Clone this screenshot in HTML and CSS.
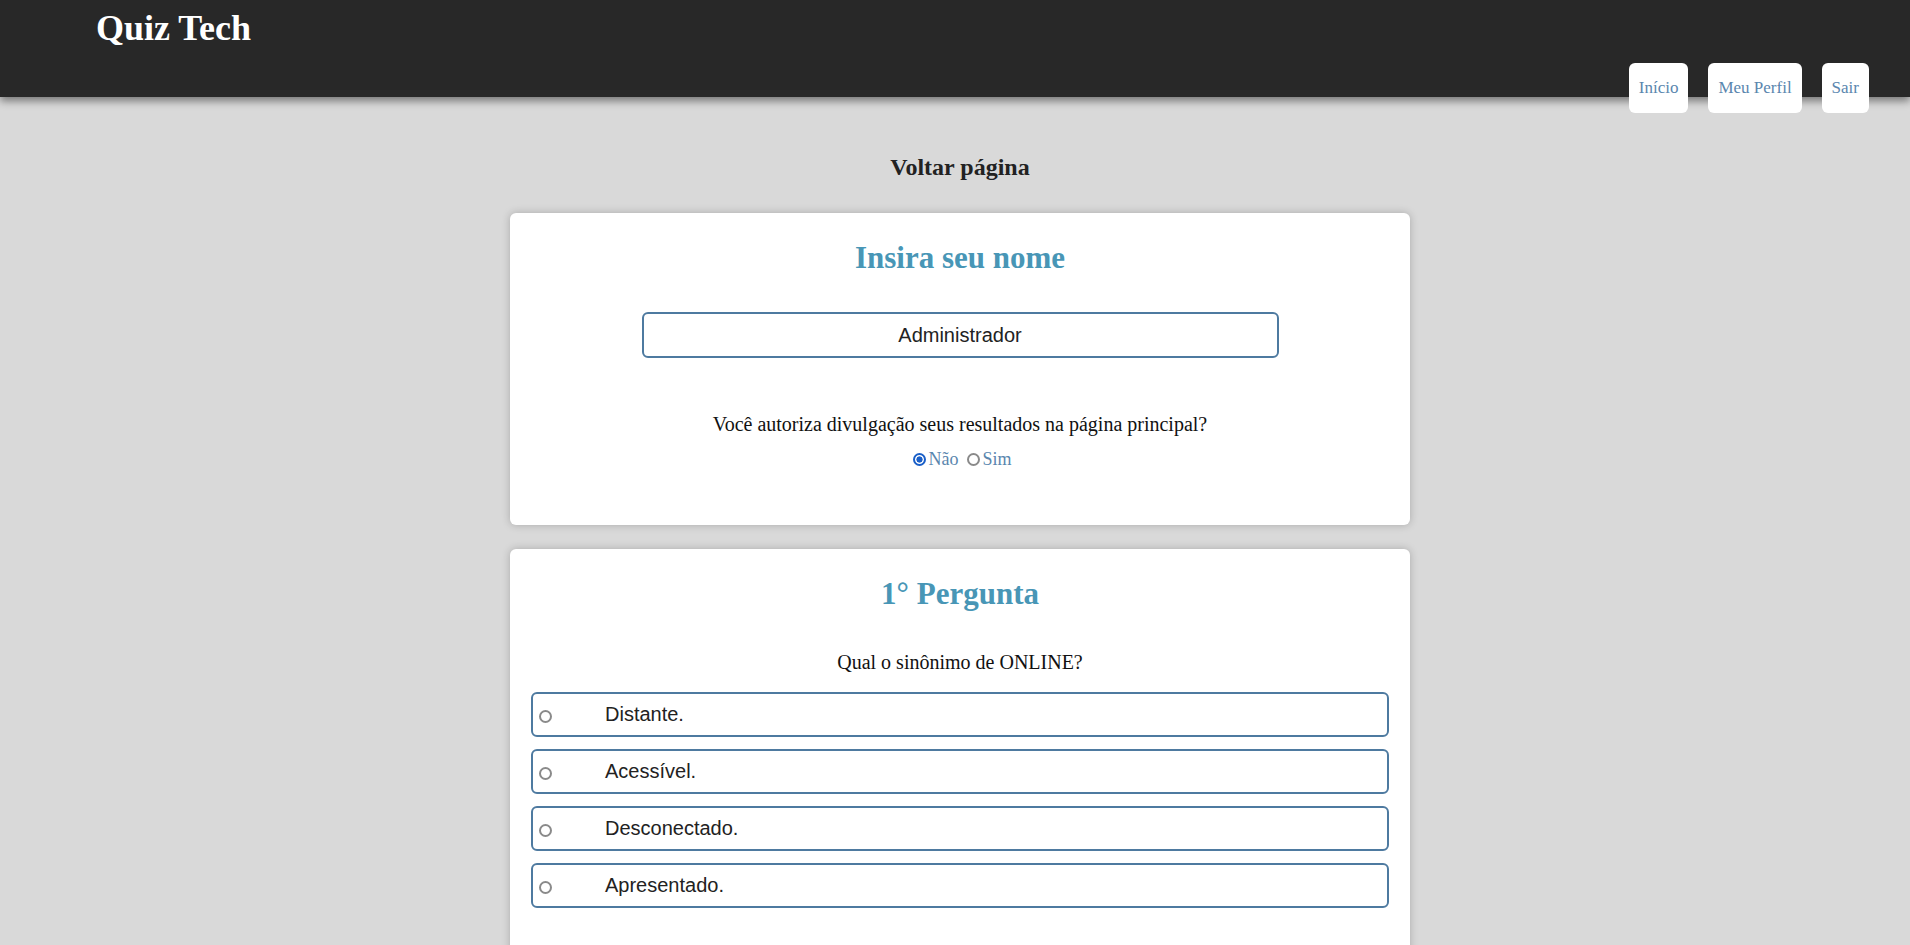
FILE: index.html
```html
<!DOCTYPE html>
<html lang="pt-BR">
<head>
<meta charset="utf-8">
<title>Quiz Tech</title>
<link rel="stylesheet" href="styles.css">
</head>
<body>
<header class="topbar">
  <h1 class="brand">Quiz Tech</h1>
  <nav class="nav">
    <a class="nav-btn" href="#">Início</a>
    <a class="nav-btn" href="#">Meu Perfil</a>
    <a class="nav-btn" href="#">Sair</a>
  </nav>
</header>
<main class="content">
  <a class="back" href="#">Voltar página</a>
  <section class="card card-name">
    <h2 class="card-title">Insira seu nome</h2>
    <input class="name-input" type="text" value="Administrador">
    <p class="question">Você autoriza divulgação seus resultados na página principal?</p>
    <div class="consent">
      <label class="consent-opt"><input class="radio" type="radio" name="consent" checked>Não</label>
      <label class="consent-opt"><input class="radio" type="radio" name="consent">Sim</label>
    </div>
  </section>
  <section class="card card-question">
    <h2 class="card-title">1° Pergunta</h2>
    <p class="question q-main">Qual o sinônimo de ONLINE?</p>
    <div class="options">
      <label class="option"><input class="radio" type="radio" name="q1"><span class="option-text">Distante.</span></label>
      <label class="option"><input class="radio" type="radio" name="q1"><span class="option-text">Acessível.</span></label>
      <label class="option"><input class="radio" type="radio" name="q1"><span class="option-text">Desconectado.</span></label>
      <label class="option"><input class="radio" type="radio" name="q1"><span class="option-text">Apresentado.</span></label>
    </div>
  </section>
</main>
</body>
</html>
```
FILE: styles.css
```css
html, body {
  margin: 0;
  padding: 0;
}
body {
  background: #d9d9d9;
  font-family: "Liberation Serif", "Times New Roman", serif;
  color: #111;
}
.topbar {
  height: 97px;
  box-sizing: border-box;
  background: #282828;
  display: flex;
  align-items: flex-start;
  padding: 8px 41px 0 96px;
  box-shadow: 0 4px 8px rgba(0, 0, 0, 0.45);
  position: relative;
  z-index: 1;
}
.brand {
  margin: 0;
  font-size: 36px;
  line-height: 1.15;
  font-weight: bold;
  color: #ffffff;
}
.nav {
  margin-left: auto;
  margin-top: 55px;
  display: flex;
  gap: 20px;
}
.nav-btn {
  display: block;
  background: #ffffff;
  border-radius: 6px;
  padding: 15px 10px;
  font-size: 17px;
  line-height: 20px;
  color: #5a86ae;
  text-decoration: none;
}
.content {
  display: flex;
  flex-direction: column;
  align-items: center;
  padding: 56px 0 40px 10px;
}
.back {
  font-size: 24px;
  line-height: 28px;
  font-weight: bold;
  color: #222;
  text-decoration: none;
  margin-bottom: 32px;
}
.card {
  width: 900px;
  box-sizing: border-box;
  background: #ffffff;
  border-radius: 6px;
  box-shadow: 0 0 8px rgba(0, 0, 0, 0.22);
  padding: 26px 21px 24px;
  display: flex;
  flex-direction: column;
  align-items: center;
}
.card + .card {
  margin-top: 24px;
}
.card-name {
  padding-bottom: 55px;
}
.card-question {
  padding-bottom: 70px;
}
.card-title {
  margin: 0;
  font-size: 31px;
  line-height: 38px;
  font-weight: bold;
  color: #4896b6;
}
.name-input {
  margin-top: 35px;
  width: 637px;
  height: 46px;
  box-sizing: border-box;
  border: 2px solid #4e7aa0;
  border-radius: 6px;
  text-align: center;
  font-family: "Liberation Sans", Arial, sans-serif;
  font-size: 20px;
  color: #222;
  outline: none;
}
.question {
  margin: 54px 0 0;
  font-size: 20px;
  line-height: 24px;
  color: #111;
}
.q-main {
  margin-top: 37px;
}
.radio {
  appearance: none;
  -webkit-appearance: none;
  box-sizing: border-box;
  width: 13px;
  height: 13px;
  border: 2px solid #8a8a8a;
  border-radius: 50%;
  background: #ffffff;
  flex: none;
}
.radio:checked {
  border-color: #1a5fc8;
  background: radial-gradient(circle, #1a5fc8 0 2.8px, #ffffff 3.4px);
}
.consent {
  margin-top: 12px;
  display: flex;
  gap: 4px;
  font-size: 18px;
  line-height: 22px;
  color: #5a86ae;
}
.consent-opt {
  display: flex;
  align-items: center;
}
.consent-opt .radio {
  margin: 1px 2px 0 5px;
}
.options {
  align-self: stretch;
  margin-top: 18px;
  display: flex;
  flex-direction: column;
  gap: 12px;
}
.option {
  height: 45px;
  box-sizing: border-box;
  border: 2px solid #4e7aa0;
  border-radius: 6px;
  display: flex;
  align-items: center;
}
.option .radio {
  margin: 4px 0 0 6px;
}
.option-text {
  margin-left: 53px;
  font-family: "Liberation Sans", Arial, sans-serif;
  font-size: 20px;
  color: #222;
}
```
